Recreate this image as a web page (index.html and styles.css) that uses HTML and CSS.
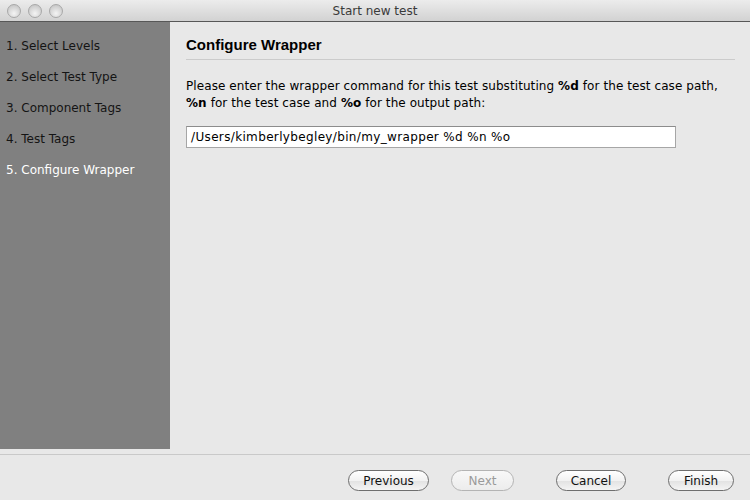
FILE: index.html
```html
<!DOCTYPE html>
<html>
<head>
<meta charset="utf-8">
<link rel="stylesheet" href="styles.css">
</head>
<body>
<div class="window">
  <div class="titlebar">
    <div class="lights">
      <span class="light"></span><span class="light"></span><span class="light"></span>
    </div>
    <div class="title">Start new test</div>
  </div>
  <div class="body">
    <div class="sidebar">
      <div class="step">1. Select Levels</div>
      <div class="step">2. Select Test Type</div>
      <div class="step">3. Component Tags</div>
      <div class="step">4. Test Tags</div>
      <div class="step current">5. Configure Wrapper</div>
    </div>
    <div class="main">
      <h1 class="heading">Configure Wrapper</h1>
      <p class="desc">Please enter the wrapper command for this test substituting <b>%d</b> for the test case path,<br><b>%n</b> for the test case and <b>%o</b> for the output path:</p>
      <div class="field">/Users/kimberlybegley/bin/my_wrapper %d %n %o</div>
    </div>
  </div>
  <div class="footer">
    <div class="btn prev">Previous</div>
    <div class="btn next disabled">Next</div>
    <div class="btn cancel">Cancel</div>
    <div class="btn finish">Finish</div>
  </div>
</div>
</body>
</html>
```

FILE: styles.css
```css
* { box-sizing: border-box; }
html, body { margin: 0; padding: 0; }
body {
  width: 750px;
  height: 500px;
  overflow: hidden;
  background: #e8e8e8;
  font-family: "DejaVu Sans", sans-serif;
  font-size: 12px;
  color: #000;
}
.window {
  display: flex;
  flex-direction: column;
  height: 500px;
}
.titlebar {
  position: relative;
  height: 22px;
  background: linear-gradient(#ececec, #d2d2d2);
  border-bottom: 1px solid #575757;
  display: flex;
  align-items: center;
  justify-content: center;
}
.lights {
  position: absolute;
  left: 7px;
  top: 4px;
  display: flex;
  gap: 7px;
}
.light {
  width: 14px;
  height: 14px;
  border-radius: 50%;
  border: 1px solid #a8a8a8;
  background: radial-gradient(circle at 50% 70%, #f4f4f4 0%, #d6d6d6 55%, #bdbdbd 100%);
}
.title {
  font-size: 12px;
  color: #3a3a3a;
  padding-top: 1px;
}
.body {
  display: flex;
  height: 427px;
}
.sidebar {
  width: 170px;
  background: #808080;
  padding: 18px 0 0 6px;
}
.step {
  height: 31px;
  line-height: 1;
  color: #141414;
}
.step.current { color: #ffffff; }
.main {
  flex: 1;
  padding: 13px 15px 0 16px;
}
.heading {
  margin: 0;
  font-family: "Liberation Sans", Arial, sans-serif;
  font-weight: bold;
  font-size: 15px;
  line-height: 20px;
  padding-bottom: 4px;
  border-bottom: 1px solid #cbcbcb;
}
.desc {
  margin: 18px 0 0 0;
  line-height: 17px;
  letter-spacing: 0.08px;
}
.desc b { font-weight: bold; }
.field {
  margin-top: 14px;
  width: 490px;
  height: 22px;
  background: #fff;
  border: 1px solid #a6a6a6;
  border-top-color: #8c8c8c;
  padding: 3px 0 0 4px;
  font-size: 12px;
  letter-spacing: 0.35px;
}
.footer {
  flex: 1;
  margin-top: 5px;
  border-top: 1px solid #c9c9c9;
  display: flex;
  align-items: flex-start;
  padding-top: 15px;
}
.btn {
  height: 21px;
  border: 1px solid #6e6e6e;
  border-radius: 11px;
  background: linear-gradient(#ffffff 0%, #f2f2f2 50%, #e2e2e2 51%, #f4f4f4 100%);
  font-size: 12px;
  line-height: 20px;
  text-align: center;
  color: #111;
}
.prev { margin-left: 348px; width: 81px; }
.next { margin-left: 22px; width: 63px; }
.cancel { margin-left: 42px; width: 70px; }
.finish { margin-left: 42px; width: 66px; }
.btn.disabled {
  color: #9a9a9a;
  border-color: #b4b4b4;
  background: linear-gradient(#f8f8f8, #ececec);
}
```
